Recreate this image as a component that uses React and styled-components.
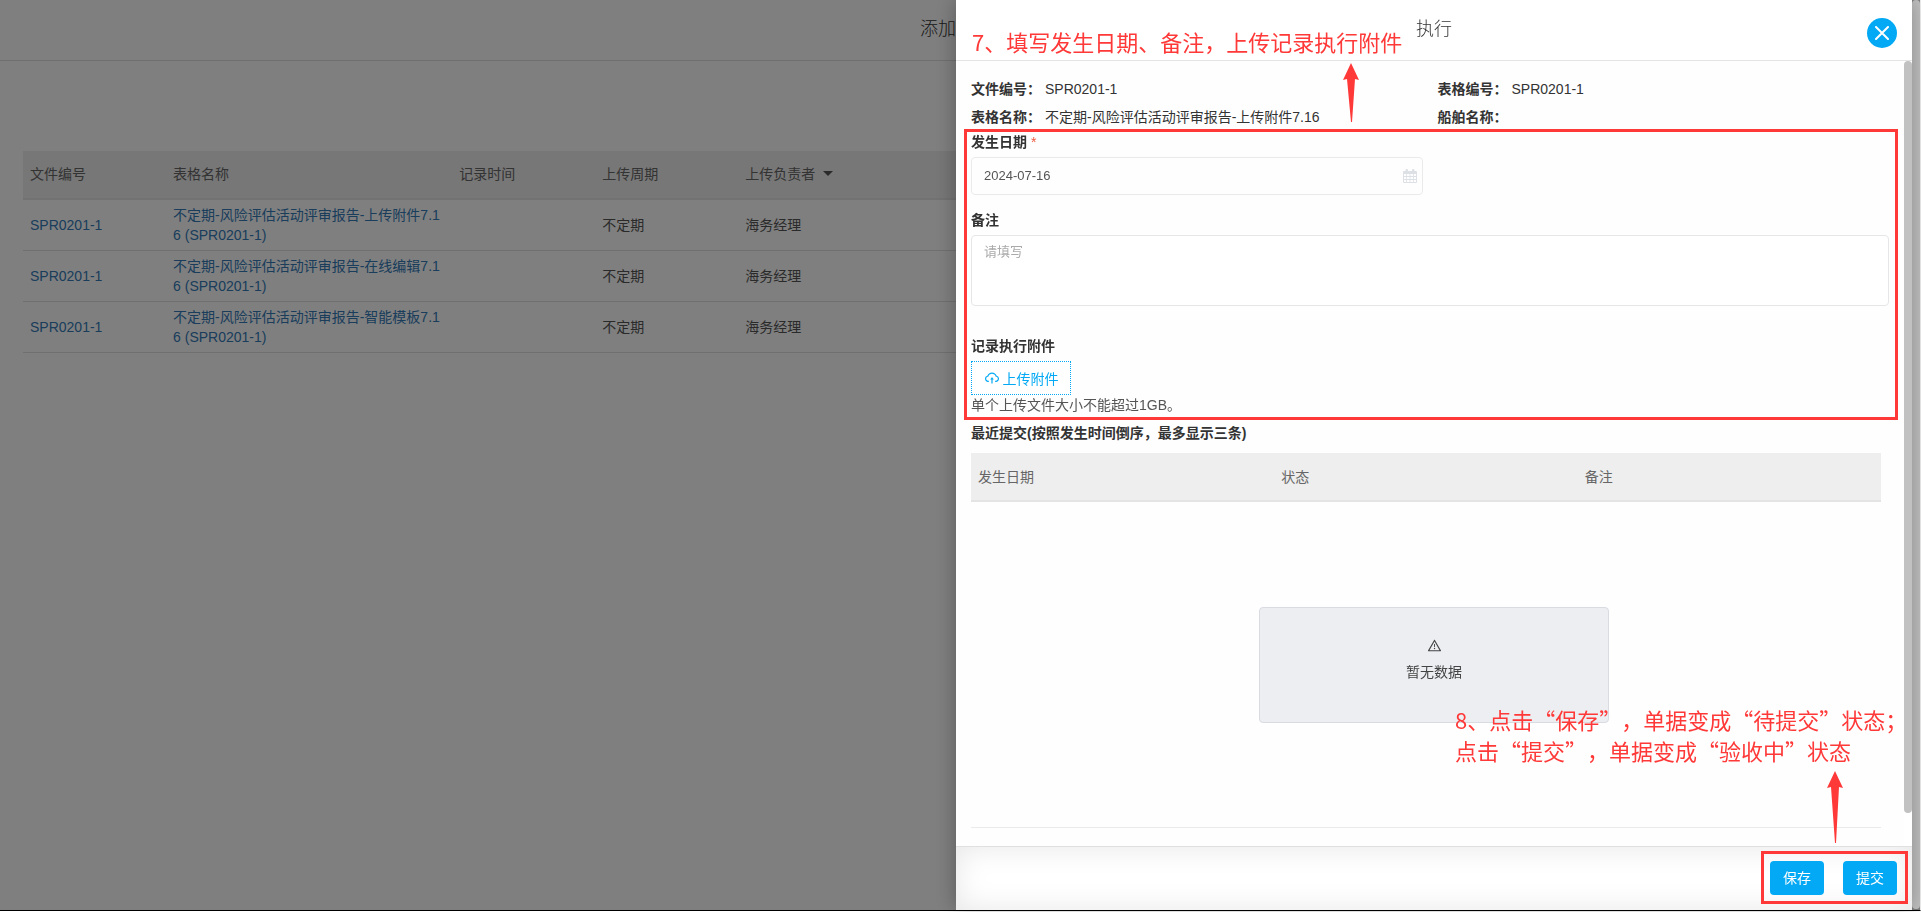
import React, { useState } from "react";
import styled, { createGlobalStyle } from "styled-components";
import { AiOutlineCloudUpload, AiOutlineWarning } from "react-icons/ai";

const rows = [
	{ code: "SPR0201-1", name: "不定期-风险评估活动评审报告-上传附件7.16 (SPR0201-1)", period: "不定期", owner: "海务经理" },
	{ code: "SPR0201-1", name: "不定期-风险评估活动评审报告-在线编辑7.16 (SPR0201-1)", period: "不定期", owner: "海务经理" },
	{ code: "SPR0201-1", name: "不定期-风险评估活动评审报告-智能模板7.16 (SPR0201-1)", period: "不定期", owner: "海务经理" },
];

const CalendarIcon = () => (
	<svg width="14" height="14" viewBox="0 0 14 14" aria-hidden="true">
		<path
			fill="currentColor"
			fillRule="evenodd"
			d="M1 2h1.5V1a1 1 0 0 1 1-1h.5a1 1 0 0 1 1 1v1h4V1a1 1 0 0 1 1-1h.5a1 1 0 0 1 1 1v1H13a1 1 0 0 1 1 1v10a1 1 0 0 1-1 1H1a1 1 0 0 1-1-1V3a1 1 0 0 1 1-1zM1 5v2h2.2V5zM4 5v2h2.6V5zM7.4 5v2H10V5zM10.8 5v2H13V5zM1 8v2h2.2V8zM4 8v2h2.6V8zM7.4 8v2H10V8zM10.8 8v2H13V8zM1 11v2h2.2v-2zM4 11v2h2.6v-2zM7.4 11v2H10v-2zM10.8 11v2H13v-2z"
		/>
	</svg>
);

const ArrowUp = ({ length }) => (
	<svg width="16" height={length} viewBox={`0 0 16 ${length}`} aria-hidden="true">
		<path fill="#ff3838" d={`M8 0L16 17L12 16L9 ${length}H8L4 16L0 17z`} />
	</svg>
);

const RecordPage = () => (
	<Page>
		<PageHeader>
			<Title>添加</Title>
		</PageHeader>
		<PageBody>
			<RecordTable>
				<colgroup>
					<Col $units={1} />
					<Col $units={2} />
					<Col $units={1} />
					<Col $units={1} />
					<col />
				</colgroup>
				<thead>
					<tr>
						<Th>文件编号</Th>
						<Th>表格名称</Th>
						<Th>记录时间</Th>
						<Th>上传周期</Th>
						<Th>
							<SortLabel>上传负责者<Caret /></SortLabel>
						</Th>
					</tr>
				</thead>
				<tbody>
					{rows.map((row) => (
						<tr key={row.name}>
							<Td><Link href="#">{row.code}</Link></Td>
							<Td><Link href="#">{row.name}</Link></Td>
							<Td />
							<Td>{row.period}</Td>
							<Td>{row.owner}</Td>
						</tr>
					))}
				</tbody>
			</RecordTable>
		</PageBody>
	</Page>
);

const ExecuteForm = () => {
	const [date, setDate] = useState("2024-07-16");
	const [remark, setRemark] = useState("");
	return (
		<FormArea>
			<Field $space={15}>
				<Label htmlFor="date">发生日期 <Required>*</Required></Label>
				<DateBox>
					<DateInput id="date" value={date} onChange={(e) => setDate(e.target.value)} />
					<CalendarIcon />
				</DateBox>
			</Field>
			<Field $space={30}>
				<Label htmlFor="remark">备注</Label>
				<TextArea id="remark" placeholder="请填写" value={remark} onChange={(e) => setRemark(e.target.value)} />
			</Field>
			<Field $space={0}>
				<Label as="div">记录执行附件</Label>
				<UploadButton type="button">
					<AiOutlineCloudUpload size={16} />
					上传附件
				</UploadButton>
				<Hint>单个上传文件大小不能超过1GB。</Hint>
			</Field>
			<Frame $x={7} $y={2} $right={9} $bottom={5} />
		</FormArea>
	);
};

const App = () => (
	<>
		<GlobalStyle />
		<RecordPage />
		<Overlay>
			<Drawer>
				<DrawerHeader>
					<Title>执行</Title>
					<CloseButton type="button" aria-label="关闭">
						<svg width="14" height="14" viewBox="0 0 14 14">
							<path d="M1 1L13 13M13 1L1 13" stroke="#fff" strokeWidth="2" strokeLinecap="round" />
						</svg>
					</CloseButton>
				</DrawerHeader>
				<DrawerMain>
					<DrawerBody>
						<InfoGrid>
							<InfoItem><b>文件编号：</b>SPR0201-1</InfoItem>
							<InfoItem><b>表格编号：</b>SPR0201-1</InfoItem>
							<InfoItem><b>表格名称：</b>不定期-风险评估活动评审报告-上传附件7.16</InfoItem>
							<InfoItem><b>船舶名称：</b></InfoItem>
						</InfoGrid>
						<ExecuteForm />
						<Recent>
							<RecentTitle>最近提交(按照发生时间倒序，最多显示三条)</RecentTitle>
							<RecentTable>
								<thead>
									<tr>
										<Th>发生日期</Th>
										<Th>状态</Th>
										<Th>备注</Th>
									</tr>
								</thead>
							</RecentTable>
							<EmptyArea>
								<EmptyBox>
									<AiOutlineWarning size={15} />
									暂无数据
								</EmptyBox>
							</EmptyArea>
						</Recent>
					</DrawerBody>
					<ScrollTrack><ScrollThumb $rest={33} /></ScrollTrack>
				</DrawerMain>
				<DrawerFooter>
					<ButtonGroup>
						<ActionButton type="button">保存</ActionButton>
						<ActionButton type="button">提交</ActionButton>
						<Frame $x={9} $y={10} $right={11} $bottom={9} />
					</ButtonGroup>
				</DrawerFooter>
				<TopNote>7、填写发生日期、备注，上传记录执行附件</TopNote>
				<TopArrow><ArrowUp length={59} /></TopArrow>
				<BottomNote>
					8、点击“保存”，单据变成“待提交”状态；<br />
					点击“提交”，单据变成“验收中”状态
				</BottomNote>
				<BottomArrow><ArrowUp length={72} /></BottomArrow>
			</Drawer>
			<ScrollTrack><ScrollThumb $rest={1} /></ScrollTrack>
		</Overlay>
	</>
);

const GlobalStyle = createGlobalStyle`
	* {
		box-sizing: border-box;
	}
	body {
		margin: 0;
		background: #fff;
		color: #333;
		font-family: "Liberation Sans", "Noto Sans CJK SC", sans-serif;
		font-size: 14px;
		line-height: 20px;
		overflow: hidden;
	}
	button, input, textarea {
		font-family: inherit;
	}
`;
const Page = styled.div`
	margin-right: 9px;
`;
const PageHeader = styled.header`
	height: 61px;
	padding: 18px 50% 0 0;
	border-bottom: 1px solid #e0e0e0;
	text-align: right;
`;
const Title = styled.h1`
	margin: 0;
	font-size: 18px;
	line-height: 22px;
	font-weight: 300;
	color: #333;
`;
const PageBody = styled.main`
	padding: 90px 23px 0;
`;
const RecordTable = styled.table`
	width: 100%;
	table-layout: fixed;
	border-collapse: separate;
	border-spacing: 0;
	word-break: break-all;
	th {
		padding-bottom: 2px;
	}
`;
const Col = styled.col`
	width: calc(100% * ${(props) => props.$units} * 23 / 300);
`;
const Th = styled.th`
	height: 49px;
	padding: 0 7px;
	background: #eee;
	border-bottom: 2px solid #e4e4e4;
	text-align: left;
	font-weight: 400;
	color: #666;
`;
const SortLabel = styled.span`
	display: inline-flex;
	align-items: center;
	gap: 8px;
`;
const Caret = styled.i`
	border: 5px solid transparent;
	border-top-color: #555;
	border-bottom: 0;
`;
const Td = styled.td`
	height: 51px;
	padding: 5px 7px;
	border-bottom: 1px solid #e0e0e0;
	color: #555;
`;
const Link = styled.a`
	color: #337ab7;
	text-decoration: none;
`;
const Overlay = styled.div`
	position: fixed;
	inset: 0 0 1px;
	display: grid;
	grid-template-columns: 1fr 8px;
	background: rgba(0, 0, 0, 0.5);
	border-right: 1px solid #f1f1f1;
	border-bottom: 1px solid #000;
`;
const Drawer = styled.section`
	position: relative;
	display: flex;
	flex-direction: column;
	width: 50%;
	min-height: 0;
	margin-left: auto;
	background: #fff;
	box-shadow: 0 0 20px rgba(0, 0, 0, 0.3);
`;
const DrawerHeader = styled.header`
	position: relative;
	display: flex;
	justify-content: center;
	height: 61px;
	padding-top: 18px;
	border-bottom: 1px solid #e4e4e4;
`;
const CloseButton = styled.button`
	position: absolute;
	top: 18px;
	right: 15px;
	display: flex;
	align-items: center;
	justify-content: center;
	width: 30px;
	height: 30px;
	padding: 0;
	border: 0;
	border-radius: 50%;
	background: #03a9f4;
	cursor: pointer;
`;
const DrawerMain = styled.div`
	flex: 1;
	display: flex;
	min-height: 0;
`;
const DrawerBody = styled.div`
	flex: 1;
	display: flex;
	flex-direction: column;
	padding: 14px 15px 18px;
	background: #fefefe;
`;
const InfoGrid = styled.div`
	display: grid;
	grid-template-columns: 1fr 1fr;
	column-gap: 15px;
`;
const InfoItem = styled.div`
	display: flex;
	gap: 4px;
	line-height: 28px;
`;
const FormArea = styled.div`
	position: relative;
	padding-top: 1px;
`;
const Field = styled.div`
	margin-bottom: ${(props) => props.$space}px;
`;
const Label = styled.label`
	display: block;
	padding-bottom: 5px;
	font-weight: 700;
`;
const Required = styled.span`
	font-weight: 400;
	color: #f0593e;
`;
const DateBox = styled.div`
	display: flex;
	align-items: center;
	width: calc(50% - 7px);
	height: 38px;
	padding-right: 5px;
	border: 1px solid #eaeaea;
	border-radius: 4px;
	color: #dde1e5;
`;
const DateInput = styled.input`
	flex: 1;
	padding: 0 12px 2px;
	border: 0;
	outline: 0;
	background: none;
	font-size: 13px;
	color: #555;
`;
const TextArea = styled.textarea`
	display: block;
	width: 100%;
	height: 71px;
	padding: 6px 12px;
	border: 1px solid #e6e6e6;
	border-radius: 4px;
	outline: 0;
	resize: none;
	font-size: 13px;
	line-height: 20px;
	&::placeholder {
		color: #aaa;
	}
`;
const UploadButton = styled.button`
	display: flex;
	align-items: center;
	justify-content: center;
	gap: 3px;
	width: 100px;
	height: 34px;
	padding: 0;
	border: 1px dotted #03a9f4;
	background: #fff;
	font-size: 14px;
	color: #03a9f4;
	cursor: pointer;
`;
const Hint = styled.div`
	color: #555;
`;
const Frame = styled.div`
	position: absolute;
	top: ${(props) => -props.$y}px;
	right: ${(props) => -props.$right}px;
	bottom: ${(props) => -props.$bottom}px;
	left: ${(props) => -props.$x}px;
	border: 3px solid #ff3838;
	pointer-events: none;
`;
const Recent = styled.section`
	flex: 1;
	display: flex;
	flex-direction: column;
	margin-right: 8px;
	padding-top: 8px;
	border-bottom: 1px solid #eaeaea;
`;
const RecentTitle = styled.h2`
	margin: 0 0 10px;
	font-size: 14px;
	line-height: 20px;
	font-weight: 700;
`;
const RecentTable = styled.table`
	width: 100%;
	table-layout: fixed;
	border-spacing: 0;
`;
const EmptyArea = styled.div`
	flex: 1;
	display: flex;
	align-items: center;
	justify-content: center;
	padding-left: 16px;
`;
const EmptyBox = styled.div`
	display: flex;
	flex-direction: column;
	align-items: center;
	justify-content: center;
	gap: 9px;
	width: 350px;
	height: 116px;
	padding-bottom: 10px;
	border: 1px solid #d8dbe0;
	border-radius: 4px;
	background: #eceef2;
	color: #444;
`;
const DrawerFooter = styled.footer`
	display: flex;
	align-items: center;
	justify-content: flex-end;
	height: 64px;
	padding: 0 15px 1px 0;
	border-top: 1px solid #e0e0e0;
	box-shadow: inset 0 0 30px rgba(0, 0, 0, 0.1);
`;
const ButtonGroup = styled.div`
	position: relative;
	display: flex;
	gap: 19px;
`;
const ActionButton = styled.button`
	width: 54px;
	height: 34px;
	padding: 0 0 2px;
	border: 0;
	border-radius: 4px;
	background: #03a9f4;
	font-size: 14px;
	color: #fff;
	cursor: pointer;
`;
const ScrollTrack = styled.div`
	flex: none;
	display: flex;
	flex-direction: column;
	width: 8px;
`;
const ScrollThumb = styled.div`
	flex: 1;
	margin-bottom: ${(props) => props.$rest}px;
	border-radius: 4px;
	background: #c1c1c1;
`;
const Note = styled.p`
	position: absolute;
	margin: 0;
	font-family: "Noto Sans CJK SC", sans-serif;
	font-size: 22px;
	line-height: 31px;
	text-spacing-trim: space-all;
	white-space: nowrap;
	color: #ff3838;
`;
const TopNote = styled(Note)`
	top: 26px;
	left: 16px;
`;
const BottomNote = styled(Note)`
	left: 499px;
	bottom: 144px;
`;
const Arrow = styled.div`
	position: absolute;
	display: flex;
`;
const TopArrow = styled(Arrow)`
	top: 63px;
	left: 387px;
`;
const BottomArrow = styled(Arrow)`
	right: 69px;
	bottom: 67px;
`;

export default App;
